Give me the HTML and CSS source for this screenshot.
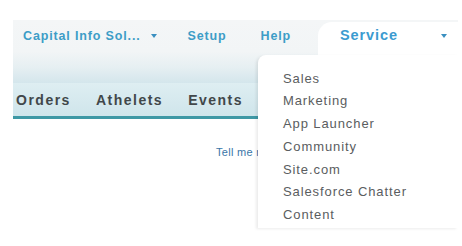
FILE: index.html
```html
<!DOCTYPE html>
<html lang="en">
<head>
<meta charset="utf-8">
<title>Service menu</title>
<link rel="stylesheet" href="styles.css">
</head>
<body>
<div class="page">
  <header class="header">
    <nav class="links">
      <a class="link org">Capital Info Sol...<span class="caret"></span></a>
      <a class="link setup">Setup</a>
      <a class="link help">Help</a>
    </nav>
    <div class="app-tab">
      <span class="app-name">Service</span>
      <span class="caret app-caret"></span>
    </div>
  </header>
  <div class="tabbar">
    <span class="tab">Orders</span>
    <span class="tab">Athelets</span>
    <span class="tab">Events</span>
  </div>
  <div class="content">
    <a class="tell">Tell me more!</a>
  </div>
  <ul class="menu">
    <li>Sales</li>
    <li>Marketing</li>
    <li>App Launcher</li>
    <li>Community</li>
    <li>Site.com</li>
    <li>Salesforce Chatter</li>
    <li>Content</li>
  </ul>
</div>
</body>
</html>
```
FILE: styles.css
```css
html, body {
  margin: 0;
  padding: 0;
  background: #ffffff;
}

body {
  font-family: "Liberation Sans", Arial, sans-serif;
  width: 462px;
  height: 246px;
  overflow: hidden;
}

.page {
  position: relative;
  padding: 20px 4px 0 13px;
}

.header {
  display: flex;
  align-items: flex-start;
  height: 63px;
  background: linear-gradient(#f4f6f7 0%, #f2f5f6 50%, #e6eff2 75%, #d4e6ec 100%);
}

.links {
  display: flex;
  align-items: center;
  height: 32px;
  padding-left: 10px;
}

.link {
  font-size: 12.5px;
  font-weight: bold;
  letter-spacing: 0.85px;
  color: #3d9dc7;
  line-height: 32px;
  display: flex;
  align-items: center;
}

.setup { margin-left: 31px; }
.help { margin-left: 34px; }

.caret {
  display: inline-block;
  width: 0;
  height: 0;
  border-left: 3.5px solid transparent;
  border-right: 3.5px solid transparent;
  border-top: 4px solid #3a8fc0;
  margin-left: 10px;
}

.app-tab {
  margin-left: auto;
  margin-top: 2px;
  width: 140px;
  height: 33px;
  background: #ffffff;
  border-top-left-radius: 14px;
  display: flex;
  align-items: flex-start;
  padding-left: 22px;
  box-sizing: border-box;
}

.app-name {
  font-size: 14.5px;
  font-weight: bold;
  letter-spacing: 0.9px;
  color: #3b9bd0;
  line-height: 26px;
}

.app-caret {
  margin-left: auto;
  margin-right: 11px;
  margin-top: 11.5px;
}

.tabbar {
  display: flex;
  height: 31px;
  padding: 2px 0 0 3px;
  background: linear-gradient(#deeef2, #cfe5eb);
  border-bottom: 3px solid #3e98a5;
}

.tab {
  font-size: 14px;
  font-weight: bold;
  letter-spacing: 1.5px;
  color: #41474a;
  line-height: 31px;
  margin-right: 25px;
}

.content {
  padding: 23px 0 0 203px;
}

.tell {
  font-size: 11px;
  line-height: 14px;
  color: #3a76a8;
  letter-spacing: 0.3px;
}

.menu {
  position: absolute;
  left: 258px;
  top: 55px;
  width: 200px;
  height: 173px;
  margin: 0;
  padding: 12.5px 0 0 25px;
  box-sizing: border-box;
  list-style: none;
  background: #ffffff;
  border-top-left-radius: 8px;
  box-shadow: -2px 1px 3px rgba(0, 0, 0, 0.08);
}

.menu li {
  font-size: 13px;
  line-height: 22.77px;
  letter-spacing: 0.9px;
  color: #5a5d60;
}
```
